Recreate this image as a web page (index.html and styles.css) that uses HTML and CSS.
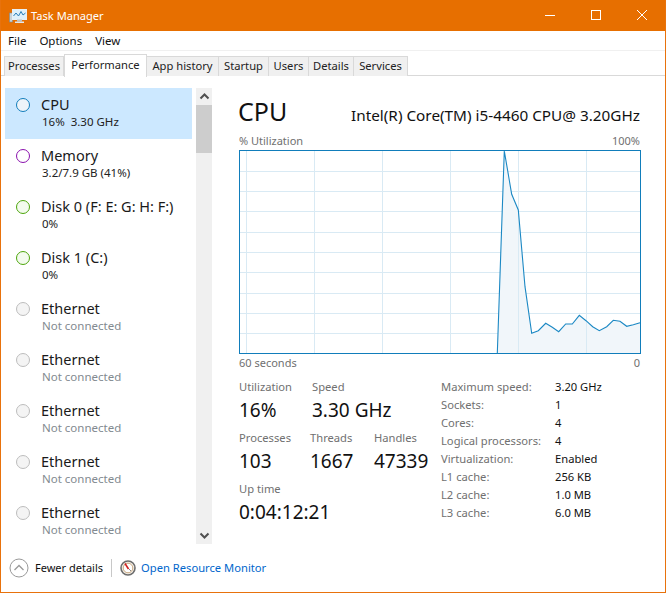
FILE: index.html
```html
<!DOCTYPE html>
<html lang="en">
<head>
<meta charset="utf-8">
<title>Task Manager</title>
<link rel="stylesheet" href="styles.css">
</head>
<body>
<div class="window">
  <header class="titlebar">
    <svg class="app-icon" width="18" height="16" viewBox="0 0 18 16"><rect x="0.5" y="5" width="3" height="9" fill="#c9d3d8" stroke="#7d8a90" stroke-width=".6"/><rect x="3.5" y="1.5" width="14" height="10" fill="#dff1fa" stroke="#e8f0f4"/><polyline points="4.5,8 7,5 9.5,8 12,3.5 14,7 16.5,5" fill="none" stroke="#2a7fb8" stroke-width="1"/><rect x="8" y="11.5" width="5" height="2" fill="#b8c4ca"/><rect x="6" y="13.5" width="9" height="1.5" fill="#e2e8eb"/></svg>
    <span class="title-text">Task Manager</span>
    <div class="win-controls">
      <svg width="46" height="31" viewBox="0 0 46 31"><rect x="18" y="15" width="10" height="1" fill="#fff"/></svg>
      <svg width="46" height="31" viewBox="0 0 46 31"><rect x="18.5" y="10.5" width="9" height="9" fill="none" stroke="#fff"/></svg>
      <svg width="46" height="31" viewBox="0 0 46 31"><path d="M18 10l10 10M28 10L18 20" stroke="#fff" fill="none"/></svg>
    </div>
  </header>
  <nav class="menubar"><span>File</span><span>Options</span><span>View</span></nav>
  <div class="tabs">
    <span class="tab">Processes</span>
    <span class="tab active">Performance</span>
    <span class="tab">App history</span>
    <span class="tab">Startup</span>
    <span class="tab">Users</span>
    <span class="tab">Details</span>
    <span class="tab">Services</span>
  </div>
  <div class="content">
    <aside class="sidebar">
      <ul class="devices">
        <li class="device selected"><i class="dot dot-cpu"></i><div><div class="dev-name">CPU</div><div class="dev-sub">16%&nbsp; 3.30 GHz</div></div></li>
        <li class="device"><i class="dot dot-mem"></i><div><div class="dev-name">Memory</div><div class="dev-sub">3.2/7.9 GB (41%)</div></div></li>
        <li class="device"><i class="dot dot-disk"></i><div><div class="dev-name">Disk 0 (F: E: G: H: F:)</div><div class="dev-sub">0%</div></div></li>
        <li class="device"><i class="dot dot-disk"></i><div><div class="dev-name">Disk 1 (C:)</div><div class="dev-sub">0%</div></div></li>
        <li class="device"><i class="dot"></i><div><div class="dev-name">Ethernet</div><div class="dev-sub muted">Not connected</div></div></li>
        <li class="device"><i class="dot"></i><div><div class="dev-name">Ethernet</div><div class="dev-sub muted">Not connected</div></div></li>
        <li class="device"><i class="dot"></i><div><div class="dev-name">Ethernet</div><div class="dev-sub muted">Not connected</div></div></li>
        <li class="device"><i class="dot"></i><div><div class="dev-name">Ethernet</div><div class="dev-sub muted">Not connected</div></div></li>
        <li class="device"><i class="dot"></i><div><div class="dev-name">Ethernet</div><div class="dev-sub muted">Not connected</div></div></li>
      </ul>
      <div class="scrollbar">
        <svg class="arrow" width="17" height="17" viewBox="0 0 17 17"><path d="M4.5 10.5l4-4 4 4" fill="none" stroke="#505050" stroke-width="2"/></svg>
        <div class="thumb"></div>
        <div class="track"></div>
        <svg class="arrow" width="17" height="17" viewBox="0 0 17 17"><path d="M4.5 6.5l4 4 4-4" fill="none" stroke="#505050" stroke-width="2"/></svg>
      </div>
    </aside>
    <main class="detail">
      <div class="heading"><h1>CPU</h1><span class="model">Intel(R) Core(TM) i5-4460 CPU@ 3.20GHz</span></div>
      <div class="axis axis-top"><span>% Utilization</span><span>100%</span></div>
      <svg class="chart" width="402" height="204" viewBox="239 150 402 204">
        <rect x="239.5" y="150.5" width="401" height="203" fill="#fff"/>
        <path d="M239 171.5H640M239 191.5H640M239 211.5H640M239 232.5H640M239 252.5H640M239 272.5H640M239 293.5H640M239 313.5H640M239 333.5H640" stroke="#d9eaf4" fill="none"/>
        <path d="M246.5 150V353M314.5 150V353M382.5 150V353M450.5 150V353M518.5 150V353M586.5 150V353" stroke="#d9eaf4" fill="none"/>
        <path d="M497.3 353.5L504.3 151 511.7 194.3 518.3 210 525 286.7 531.7 333.3 538.3 330.7 545.7 323.3 552.3 327.3 558.7 331.7 565.7 324 572.3 324 579.3 315.3 586 320.7 592.7 326.7 599.3 330.7 606.7 326.7 613.3 320.3 620 321.3 626.7 326.3 633.3 324.7 640 322.7V353.5Z" fill="#f1f6fa"/>
        <path d="M518.5 210V353M586.5 321V353" stroke="#d9eaf4" fill="none"/>
        <polyline points="497.3,353.5 504.3,151 511.7,194.3 518.3,210 525,286.7 531.7,333.3 538.3,330.7 545.7,323.3 552.3,327.3 558.7,331.7 565.7,324 572.3,324 579.3,315.3 586,320.7 592.7,326.7 599.3,330.7 606.7,326.7 613.3,320.3 620,321.3 626.7,326.3 633.3,324.7 640,322.7" fill="none" stroke="#1b88c4" stroke-width="1.1"/>
        <rect x="239.5" y="150.5" width="401" height="203" fill="none" stroke="#117dbb"/>
      </svg>
      <div class="axis axis-bottom"><span>60 seconds</span><span>0</span></div>
      <div class="stats">
        <div class="stats-left">
          <div class="stat-row">
            <div class="stat col-a"><div class="label">Utilization</div><div class="value">16%</div></div>
            <div class="stat"><div class="label">Speed</div><div class="value">3.30 GHz</div></div>
          </div>
          <div class="stat-row">
            <div class="stat col-b"><div class="label">Processes</div><div class="value">103</div></div>
            <div class="stat col-c"><div class="label">Threads</div><div class="value">1667</div></div>
            <div class="stat"><div class="label">Handles</div><div class="value">47339</div></div>
          </div>
          <div class="stat-row">
            <div class="stat"><div class="label">Up time</div><div class="value">0:04:12:21</div></div>
          </div>
        </div>
        <dl class="specs">
          <dt>Maximum speed:</dt><dd>3.20 GHz</dd>
          <dt>Sockets:</dt><dd>1</dd>
          <dt>Cores:</dt><dd>4</dd>
          <dt>Logical processors:</dt><dd>4</dd>
          <dt>Virtualization:</dt><dd>Enabled</dd>
          <dt>L1 cache:</dt><dd>256 KB</dd>
          <dt>L2 cache:</dt><dd>1.0 MB</dd>
          <dt>L3 cache:</dt><dd>6.0 MB</dd>
        </dl>
      </div>
    </main>
  </div>
  <footer class="footer">
    <svg width="20" height="20" viewBox="0 0 20 20"><circle cx="10" cy="10" r="9" fill="#fff" stroke="#9a9a9a"/><path d="M5.5 12l4.5-4.5 4.5 4.5" fill="none" stroke="#9a9a9a" stroke-width="1.3"/></svg>
    <span class="fewer">Fewer details</span>
    <span class="sep"></span>
    <svg width="16" height="16" viewBox="0 0 16 16"><circle cx="8" cy="8" r="7" fill="#f3efe8" stroke="#6d6d6d" stroke-width="1.6"/><circle cx="8" cy="8" r="4.8" fill="#fff" stroke="#c9a880" stroke-width="1"/><path d="M5 3.5l3.5 5.5" stroke="#d02020" stroke-width="1.6"/><path d="M9 9l2 2" stroke="#888"/></svg>
    <a class="monitor-link">Open Resource Monitor</a>
  </footer>
</div>
</body>
</html>
```

FILE: styles.css
```css
* { box-sizing: border-box; }
html, body { margin: 0; padding: 0; }
body { width: 666px; height: 593px; overflow: hidden; background: #fff; font-family: "Noto Sans", "Open Sans", sans-serif; font-size: 11.5px; color: #1a1a1a; }
.window { width: 666px; height: 593px; border: 1px solid #e8720c; border-top: 0; display: flex; flex-direction: column; }
.titlebar { height: 31px; flex: none; background: #e76f00; color: #fff; display: flex; align-items: center; padding-left: 8px; }
.app-icon { flex: none; }
.title-text { margin-left: 4px; font-size: 11.1px; }
.win-controls { margin-left: auto; display: flex; margin-right: 0; }
.win-controls svg { display: block; }
.menubar { height: 19px; flex: none; display: flex; gap: 13px; align-items: center; padding-left: 7px; font-size: 11.5px; color: #111; }
.tabs { height: 26px; flex: none; padding: 3px 0 0 3px; display: grid; grid-template-columns: 60px 83px 72px 50px 40px 45px 54px; align-items: end; border-top: 1px solid #f0f0f0; border-bottom: 1px solid #d9d9d9; }
.tab { height: 20px; background: #f0f0f0; border: 1px solid #d9d9d9; border-bottom: 0; border-left-width: 0; margin-bottom: 0; text-align: center; line-height: 18px; font-size: 11.2px; color: #222; }
.tab:first-child { border-left-width: 1px; }
.tab.active { height: 23px; background: #fff; border-left-width: 1px; margin-bottom: -1px; line-height: 19px; padding-bottom: 4px; }
.content { flex: 1; display: flex; min-height: 0; }
.sidebar { width: 212px; flex: none; display: flex; padding: 12px 0 0 4px; height: 469px; }
.devices { list-style: none; margin: 0; padding: 0; width: 187px; flex: none; }
.device { height: 51px; display: flex; align-items: flex-start; padding-left: 11px; padding-top: 8px; }
.device.selected { background: #cce8ff; }
.dot { width: 14px; height: 14px; flex: none; border-radius: 50%; border: 1px solid #bdbdbd; background: #f4f4f4; margin: 2px 11px 0 0; }
.dot-cpu { border: 1.5px solid #117dbb; background: #eef4f9; }
.dot-mem { border: 1.5px solid #8b12ae; background: #fff; }
.dot-disk { border: 1.5px solid #4da60c; background: #f3fbee; }
.dev-name { font-size: 14.5px; line-height: 18px; margin: -1px 0 1px; color: #1a1a1a; white-space: nowrap; }
.dev-sub { font-size: 11.5px; line-height: 15px; color: #222; white-space: nowrap; margin-left: 1px; }
.dev-sub.muted { color: #828a90; }
.scrollbar { width: 16px; margin-left: 4px; height: 456px; background: #f0f0f0; display: flex; flex-direction: column; flex: none; }
.arrow { display: block; flex: none; }
.thumb { height: 48px; flex: none; background: #cdcdcd; }
.track { flex: 1; }
.detail { flex: 1; padding: 0 25px 0 26px; min-width: 0; display: flex; flex-direction: column; }
.heading { height: 57px; flex: none; display: flex; justify-content: space-between; align-items: flex-start; padding-top: 18px; }
h1 { margin: 0; font-size: 25px; line-height: 34px; font-weight: 400; color: #111; margin-left: -1px; }
.model { font-size: 15.3px; line-height: 20px; margin-top: 11px; color: #111; white-space: nowrap; }
.axis { display: flex; justify-content: space-between; font-size: 11px; color: #707070; flex: none; }
.axis-top { height: 17px; line-height: 15px; margin-top: 0; }
.axis-bottom { height: 17px; line-height: 17px; }
.chart { display: block; flex: none; }
.stats { display: flex; margin-top: 8px; }
.stats-left { width: 202px; flex: none; }
.stat-row { display: flex; height: 51px; white-space: nowrap; }
.col-a { width: 73px; }
.col-b { width: 71px; }
.col-c { width: 64px; }
.label { font-size: 11.2px; line-height: 16px; color: #707070; }
.value { font-size: 19px; line-height: 26px; margin-top: 2px; color: #111; }
.specs { margin: -1px 0 0; display: grid; grid-template-columns: 114px auto; grid-auto-rows: 18px; line-height: 18px; font-size: 11.2px; white-space: nowrap; }
.specs dt { color: #707070; }
.specs dd { margin: 0; color: #111; }
.footer { height: 48px; flex: none; display: flex; align-items: center; padding-left: 8px; }
.footer svg { flex: none; display: block; }
.fewer { margin-left: 6px; margin-top: -2px; font-size: 11px; color: #111; }
.sep { width: 1px; height: 18px; background: #c8c8c8; margin: 0 8px; }
.monitor-link { margin-left: 5px; margin-top: -2px; font-size: 11.2px; color: #0066cc; }
```
